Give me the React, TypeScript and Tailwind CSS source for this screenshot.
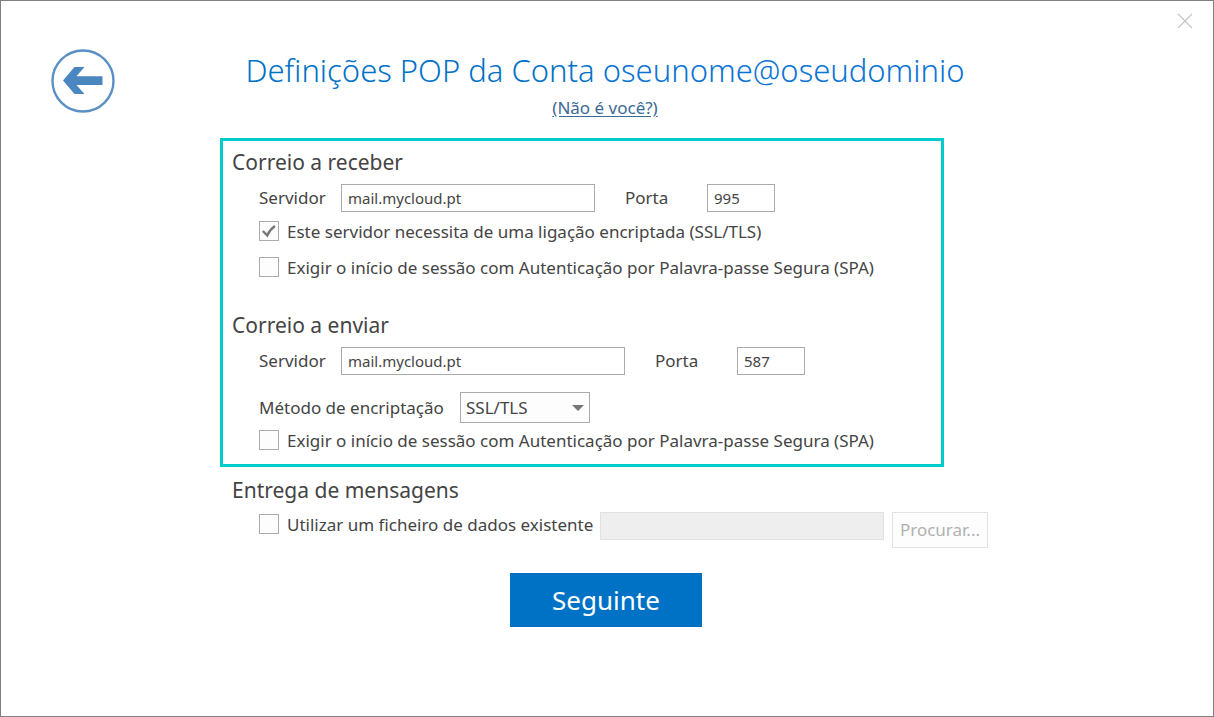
import { useState } from "react";
import type { ReactNode } from "react";

const fieldClass =
  "h-7 min-w-0 border border-[#ababab] bg-white px-1.5 text-[15px] text-[#444444] outline-none focus:border-[#0072c6]";

function BackIcon() {
  return (
    <svg viewBox="0 0 64 64" className="size-16" aria-hidden="true">
      <circle cx="32" cy="32" r="30.5" fill="none" stroke="#5a90c6" strokeWidth="2.4" />
      <path d="M12 31.5 L23.5 18 H33.5 L25.5 27.3 H51.5 V36 H25.5 L33.5 45 H23.5 Z" fill="#4a86c0" />
    </svg>
  );
}

function CheckField({
  id,
  children,
  defaultChecked = false,
}: {
  id: string;
  children: ReactNode;
  defaultChecked?: boolean;
}) {
  const [checked, setChecked] = useState(defaultChecked);

  return (
    <div className="flex h-6 items-center gap-2">
      <span className="grid size-5 shrink-0">
        <input
          id={id}
          type="checkbox"
          checked={checked}
          onChange={(e) => setChecked(e.target.checked)}
          className="col-start-1 row-start-1 size-5 appearance-none border border-[#ababab] bg-[#fdfdfd]"
        />
        {checked && (
          <svg viewBox="0 0 20 20" className="pointer-events-none col-start-1 row-start-1 size-5" aria-hidden="true">
            <path d="M3.8 10 L8.2 14.4 Q11 8.4 16 5" fill="none" stroke="#777777" strokeWidth="2.4" />
          </svg>
        )}
      </span>
      <label htmlFor={id} className="pt-0.5">
        {children}
      </label>
    </div>
  );
}

function ServerFields({
  id,
  server,
  port,
  wide = false,
}: {
  id: string;
  server: string;
  port: string;
  wide?: boolean;
}) {
  return (
    <div className="mt-1.5 flex items-center">
      <label htmlFor={`${id}-server`} className="w-[82px] shrink-0">
        Servidor
      </label>
      <input
        id={`${id}-server`}
        type="text"
        defaultValue={server}
        className={`${fieldClass} ${wide ? "w-[284px]" : "w-[254px]"}`}
      />
      <label htmlFor={`${id}-port`} className="ml-[30px] w-[82px] shrink-0">
        Porta
      </label>
      <input id={`${id}-port`} type="text" defaultValue={port} className={`${fieldClass} w-[68px]`} />
    </div>
  );
}

function SectionTitle({ children }: { children: ReactNode }) {
  return <h2 className="text-[21px] leading-8">{children}</h2>;
}

export default function App() {
  return (
    <div className="min-h-screen border border-[#808080] bg-white font-['Noto_Sans','Open_Sans',sans-serif] text-[17px] leading-6 text-[#444444]">
      <div className="flex h-12 items-start justify-end">
        <button type="button" aria-label="Fechar" className="flex h-10 w-14 items-center justify-center">
          <svg viewBox="0 0 16 16" className="size-4" aria-hidden="true">
            <path d="M1 1 L15 15 M15 1 L1 15" fill="none" stroke="#c4c4c4" strokeWidth="1.2" />
          </svg>
        </button>
      </div>

      <header className="grid grid-cols-[64px_1fr_64px] items-start pl-[50px] pr-[54px]">
        <button type="button" aria-label="Voltar">
          <BackIcon />
        </button>
        <div className="text-center">
          <h1 className="text-[31px] leading-[42px] font-light text-[#0072c6]">
            Definições POP da Conta <span className="text-[#0a74d4]">oseunome@oseudominio</span>
          </h1>
          <a href="#conta" className="mt-[5px] inline-block text-[#3b6a94] underline underline-offset-2">
            (Não é você?)
          </a>
        </div>
      </header>

      <form className="mt-[18px]" onSubmit={(e) => e.preventDefault()}>
        <div className="pr-1.5">
          <div className="mx-auto max-w-3xl">
            {/* Servidores */}
            <div className="mr-11 border-[3px] border-[#00cccc] pt-[5px] pb-3 pl-[9px]">
              <section>
                <SectionTitle>Correio a receber</SectionTitle>
                <div className="pl-[27px]">
                  <ServerFields id="incoming" server="mail.mycloud.pt" port="995" />
                  <div className="mt-[7px] flex flex-col gap-3">
                    <CheckField id="incoming-ssl" defaultChecked>
                      Este servidor necessita de uma ligação encriptada (SSL/TLS)
                    </CheckField>
                    <CheckField id="incoming-spa">
                      Exigir o início de sessão com Autenticação por Palavra-passe Segura (SPA)
                    </CheckField>
                  </div>
                </div>
              </section>

              <section className="mt-[30px]">
                <SectionTitle>Correio a enviar</SectionTitle>
                <div className="pl-[27px]">
                  <ServerFields id="outgoing" server="mail.mycloud.pt" port="587" wide />
                  <div className="mt-[17px] mb-[5px] flex items-center">
                    <label htmlFor="encryption" className="w-[201px] shrink-0">
                      Método de encriptação
                    </label>
                    <div className="grid w-[130px]">
                      <select
                        id="encryption"
                        defaultValue="SSL/TLS"
                        className="col-start-1 row-start-1 h-[31px] appearance-none border border-[#ababab] bg-[#fdfdfd] px-[5px]"
                      >
                        <option>SSL/TLS</option>
                        <option>STARTTLS</option>
                        <option>Nenhum</option>
                      </select>
                      <svg
                        viewBox="0 0 12 6"
                        className="pointer-events-none col-start-1 row-start-1 mr-1.5 h-1.5 w-3 self-center justify-self-end"
                        aria-hidden="true"
                      >
                        <path d="M0 0 H12 L6 6 Z" fill="#777777" />
                      </svg>
                    </div>
                  </div>
                  <CheckField id="outgoing-spa">
                    Exigir o início de sessão com Autenticação por Palavra-passe Segura (SPA)
                  </CheckField>
                </div>
              </section>
            </div>

            {/* Entrega */}
            <section className="mt-[7px] pl-3">
              <SectionTitle>Entrega de mensagens</SectionTitle>
              <div className="mt-1.5 flex items-start pl-[27px]">
                <div className="w-[341px] shrink-0">
                  <CheckField id="data-file">Utilizar um ficheiro de dados existente</CheckField>
                </div>
                <input
                  type="text"
                  disabled
                  aria-label="Ficheiro de dados"
                  className="h-7 min-w-0 flex-1 border border-[#e1e1e1] bg-[#eeeeee]"
                />
                <button
                  type="button"
                  disabled
                  className="ml-2 h-9 w-24 shrink-0 border border-[#e1e1e1] bg-[#fdfdfd] text-[#b1b1b1]"
                >
                  Procurar...
                </button>
              </div>
            </section>
          </div>
        </div>

        <div className="mt-[25px] flex justify-center pr-0.5">
          <button type="submit" className="h-[54px] w-48 bg-[#0072c6] text-[26px] text-white">
            Seguinte
          </button>
        </div>
      </form>
    </div>
  );
}
